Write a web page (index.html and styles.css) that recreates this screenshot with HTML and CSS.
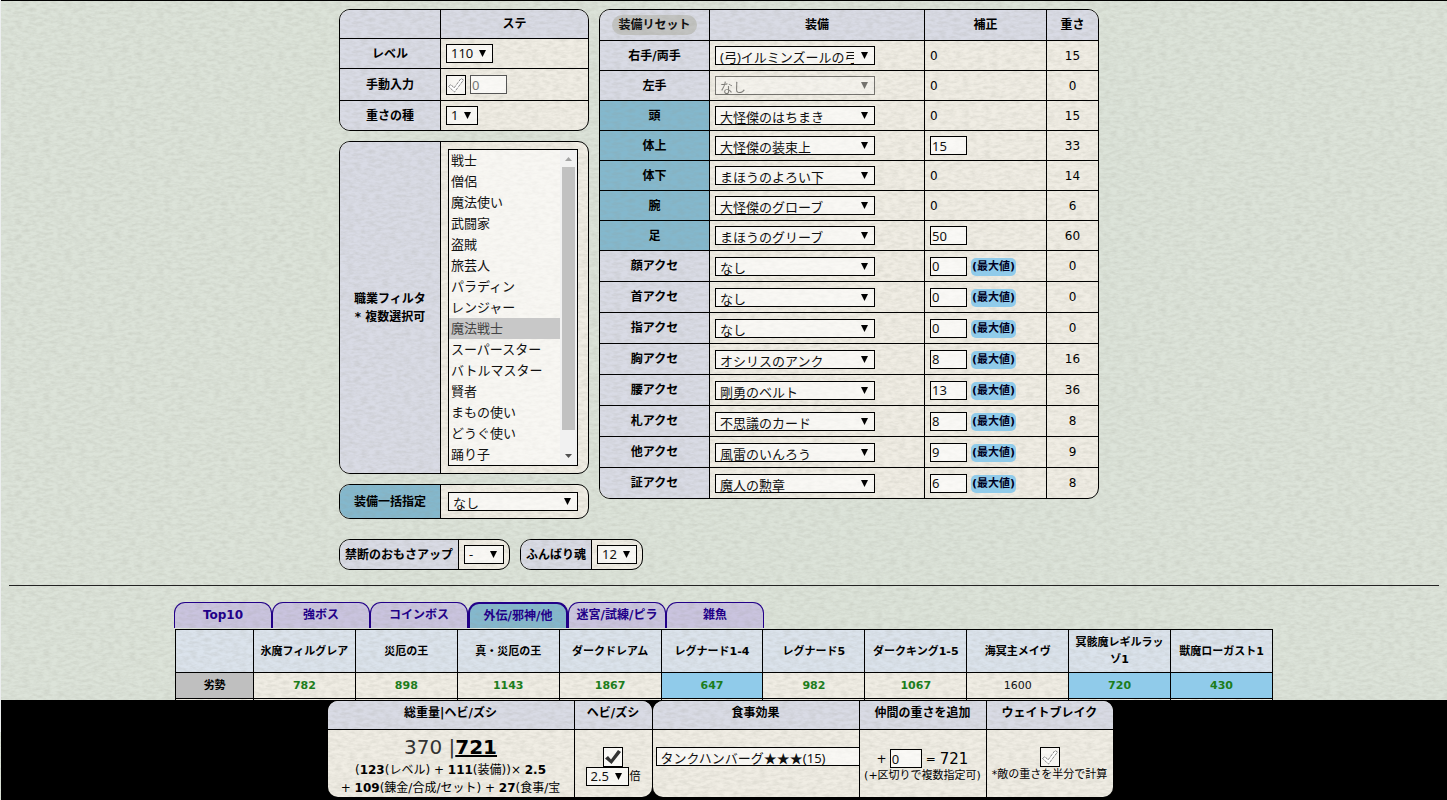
FILE: index.html
```html
<!DOCTYPE html>
<html lang="ja">
<head>
<meta charset="utf-8">
<title>総重量</title>
<link rel="stylesheet" href="styles.css">
</head>
<body>
<main class="build">
  <div class="columns">
    <div class="side">
      <div class="card">
        <table class="form stats">
          <tr class="head"><th></th><th>ステ</th></tr>
          <tr><th><label for="level">レベル</label></th><td><select id="level" class="field w47"><option>110</option></select></td></tr>
          <tr class="manual"><th><label for="manual">手動入力</label></th><td><div class="inline"><input type="checkbox" id="manual" class="check"><input type="text" class="num" value="0" aria-label="手動入力" disabled></div></td></tr>
          <tr><th><label for="seed">重さの種</label></th><td><select id="seed" class="field w32"><option>1</option></select></td></tr>
        </table>
      </div>
      <div class="card">
        <table class="form filter">
          <tr><th><label for="jobs">職業フィルタ<br>* 複数選択可</label></th><td>
            <div class="listbox">
              <select id="jobs" multiple size="15">
                <option>戦士</option><option>僧侶</option><option>魔法使い</option><option>武闘家</option><option>盗賊</option><option>旅芸人</option><option>パラディン</option><option>レンジャー</option><option selected>魔法戦士</option><option>スーパースター</option><option>バトルマスター</option><option>賢者</option><option>まもの使い</option><option>どうぐ使い</option><option>踊り子</option>
              </select>
              <div class="scrollbar">
                <svg width="17" height="17" viewBox="0 0 17 17"><path d="M5 11l3.5-4 3.5 4z" fill="#a3a3a3"/></svg>
                <div class="thumb"></div>
                <svg width="17" height="17" viewBox="0 0 17 17"><path d="M5 6l3.5 4L12 6z" fill="#505050"/></svg>
              </div>
            </div>
          </td></tr>
        </table>
      </div>
      <div class="card">
        <table class="form bulk">
          <tr><th class="teal"><label for="bulk">装備一括指定</label></th><td><select id="bulk" class="field w130 low"><option>なし</option></select></td></tr>
        </table>
      </div>
    </div>
    <div class="card gear-card">
      <table class="form gear">
        <colgroup><col class="c1"><col class="c2"><col class="c3"><col class="c4"></colgroup>
        <tr class="head"><th><button type="button" class="reset">装備リセット</button></th><th>装備</th><th>補正</th><th>重さ</th></tr>
        <tr><th><label for="g1">右手/両手</label></th><td><select id="g1" class="field w160 low"><option>(弓)イルミンズールの弓</option></select></td><td>0</td><td>15</td></tr>
        <tr><th><label for="g2">左手</label></th><td><select id="g2" class="field w160 low" disabled><option>なし</option></select></td><td>0</td><td>0</td></tr>
        <tr><th class="teal"><label for="g3">頭</label></th><td><select id="g3" class="field w160 low"><option>大怪傑のはちまき</option></select></td><td>0</td><td>15</td></tr>
        <tr><th class="teal"><label for="g4">体上</label></th><td><select id="g4" class="field w160 low"><option>大怪傑の装束上</option></select></td><td><input class="num" type="text" value="15" aria-label="体上 補正"></td><td>33</td></tr>
        <tr><th class="teal"><label for="g5">体下</label></th><td><select id="g5" class="field w160 low"><option>まほうのよろい下</option></select></td><td>0</td><td>14</td></tr>
        <tr><th class="teal"><label for="g6">腕</label></th><td><select id="g6" class="field w160 low"><option>大怪傑のグローブ</option></select></td><td>0</td><td>6</td></tr>
        <tr><th class="teal"><label for="g7">足</label></th><td><select id="g7" class="field w160 low"><option>まほうのグリーブ</option></select></td><td><input class="num" type="text" value="50" aria-label="足 補正"></td><td>60</td></tr>
        <tr class="acc"><th><label for="g8">顔アクセ</label></th><td><select id="g8" class="field w160 low"><option>なし</option></select></td><td><div class="inline"><input class="num" type="text" value="0" aria-label="顔 補正"><button type="button" class="max">(最大値)</button></div></td><td>0</td></tr>
        <tr class="acc"><th><label for="g9">首アクセ</label></th><td><select id="g9" class="field w160 low"><option>なし</option></select></td><td><div class="inline"><input class="num" type="text" value="0" aria-label="首 補正"><button type="button" class="max">(最大値)</button></div></td><td>0</td></tr>
        <tr class="acc"><th><label for="g10">指アクセ</label></th><td><select id="g10" class="field w160 low"><option>なし</option></select></td><td><div class="inline"><input class="num" type="text" value="0" aria-label="指 補正"><button type="button" class="max">(最大値)</button></div></td><td>0</td></tr>
        <tr class="acc"><th><label for="g11">胸アクセ</label></th><td><select id="g11" class="field w160 low"><option>オシリスのアンク</option></select></td><td><div class="inline"><input class="num" type="text" value="8" aria-label="胸 補正"><button type="button" class="max">(最大値)</button></div></td><td>16</td></tr>
        <tr class="acc"><th><label for="g12">腰アクセ</label></th><td><select id="g12" class="field w160 low"><option>剛勇のベルト</option></select></td><td><div class="inline"><input class="num" type="text" value="13" aria-label="腰 補正"><button type="button" class="max">(最大値)</button></div></td><td>36</td></tr>
        <tr class="acc"><th><label for="g13">札アクセ</label></th><td><select id="g13" class="field w160 low"><option>不思議のカード</option></select></td><td><div class="inline"><input class="num" type="text" value="8" aria-label="札 補正"><button type="button" class="max">(最大値)</button></div></td><td>8</td></tr>
        <tr class="acc"><th><label for="g14">他アクセ</label></th><td><select id="g14" class="field w160 low"><option>風雷のいんろう</option></select></td><td><div class="inline"><input class="num" type="text" value="9" aria-label="他 補正"><button type="button" class="max">(最大値)</button></div></td><td>9</td></tr>
        <tr class="acc"><th><label for="g15">証アクセ</label></th><td><select id="g15" class="field w160 low"><option>魔人の勲章</option></select></td><td><div class="inline"><input class="num" type="text" value="6" aria-label="証 補正"><button type="button" class="max">(最大値)</button></div></td><td>8</td></tr>
      </table>
    </div>
  </div>
  <div class="extras">
    <div class="card"><table class="form extra forbid"><tr><th><label for="forbid">禁断のおもさアップ</label></th><td><select id="forbid" class="field w40"><option>-</option></select></td></tr></table></div>
    <div class="card"><table class="form extra soul"><tr><th><label for="soul">ふんばり魂</label></th><td><select id="soul" class="field w40"><option>12</option></select></td></tr></table></div>
  </div>
</main>
<hr>
<section class="results">
  <nav class="tabs">
    <a href="#top10">Top10</a><a href="#strong">強ボス</a><a href="#coin">コインボス</a><a href="#gaiden" class="active">外伝/邪神/他</a><a href="#maze">迷宮/試練/ピラ</a><a href="#mob">雑魚</a>
  </nav>
  <table class="bosses">
    <tr><th class="corner"></th><th>氷魔フィルグレア</th><th>災厄の王</th><th>真・災厄の王</th><th>ダークドレアム</th><th>レグナード1-4</th><th>レグナード5</th><th>ダークキング1-5</th><th>海冥主メイヴ</th><th>冥骸魔レギルラッゾ1</th><th>獣魔ローガスト1</th></tr>
    <tr><th class="grey">劣勢</th><td>782</td><td>898</td><td>1143</td><td>1867</td><td class="hit">647</td><td>982</td><td>1067</td><td class="plain">1600</td><td class="hit">720</td><td class="hit">430</td></tr>
    <tr><td></td><td></td><td></td><td></td><td></td><td></td><td></td><td></td><td></td><td></td><td></td></tr>
  </table>
</section>
<footer class="dock">
  <section class="panel total">
    <div class="cell">
      <h2>総重量|ヘビ/ズシ</h2>
      <div class="body formula">
        <div class="sum">370 |<b>721</b></div>
        <div class="terms">(<b>123</b>(レベル) + <b>111</b>(装備))× <b>2.5</b></div>
        <div class="terms">+ <b>109</b>(錬金/合成/セット) + <b>27</b>(食事/宝</div>
      </div>
    </div>
    <div class="cell">
      <h2>ヘビ/ズシ</h2>
      <div class="body toggles">
        <input type="checkbox" class="check" checked aria-label="ヘビ/ズシ">
        <div class="rate"><select id="rate" class="field w43"><option>2.5</option></select><label for="rate">倍</label></div>
      </div>
    </div>
  </section>
  <section class="panel options">
    <div class="cell">
      <h2>食事効果</h2>
      <div class="body food"><select class="field w260 low" aria-label="食事効果"><option>タンクハンバーグ★★★(15)</option></select></div>
    </div>
    <div class="cell">
      <h2>仲間の重さを追加</h2>
      <div class="body ally">
        <div class="calc"><label for="ally">+</label><input id="ally" class="num w32" type="text" value="0"><span>=</span><output>721</output></div>
        <p>(+区切りで複数指定可)</p>
      </div>
    </div>
    <div class="cell">
      <h2><label for="wb">ウェイトブレイク</label></h2>
      <div class="body toggles">
        <input type="checkbox" id="wb" class="check">
        <p>*敵の重さを半分で計算</p>
      </div>
    </div>
  </section>
</footer>
</body>
</html>
```
FILE: styles.css
```css
:root {
  --paper: url("data:image/svg+xml,%3Csvg xmlns='http://www.w3.org/2000/svg' width='256' height='256'%3E%3Cfilter id='n' x='0' y='0' width='100%25' height='100%25'%3E%3CfeTurbulence type='fractalNoise' baseFrequency='.14 .34' numOctaves='3' seed='4' stitchTiles='stitch'/%3E%3CfeColorMatrix values='0 0 0 0 .3 0 0 0 0 .3 0 0 0 0 .25 .36 0 0 0 -.12'/%3E%3C/filter%3E%3Crect width='256' height='256' filter='url(%23n)'/%3E%3C/svg%3E");
  --arrow: url("data:image/svg+xml,%3Csvg xmlns='http://www.w3.org/2000/svg' width='7' height='7'%3E%3Cpath d='M0 0h7L3.500 7z'/%3E%3C/svg%3E");
  --lilac: #d9dbe5;
  --cream: #f0ede4;
  --teal: #84b8cd;
  --sky: #90cbea;
}
* { box-sizing: border-box; }
html { border-left: 1px solid #eceeef; }
body {
  margin: 0;
  padding: 8px;
  border-top: 1px solid #000;
  background: #dce3d9 var(--paper);
  color: #000;
  font: 12px/18px "DejaVu Sans", "Noto Sans CJK JP", sans-serif;
}
select, input, button { font: 13px/17px "Noto Sans", "Noto Sans CJK JP", sans-serif; margin: 0; color: #111; }
.build { width: fit-content; margin: 0 auto; padding-right: 10px; }
.columns { display: flex; align-items: flex-start; gap: 10px; }
.side { display: flex; flex-direction: column; gap: 10px; width: 250px; }
.gear-card { width: 500px; }
.extras { display: flex; gap: 10px; margin-top: 20px; }
.card { border: 1px solid #000; border-radius: 11px; overflow: hidden; background: var(--cream) var(--paper); }
.form { width: 100%; border-spacing: 0; table-layout: fixed; }
.form th, .form td { height: 30px; padding: 0; border-top: 1px solid #000; }
.form tr:first-child > * { border-top: 0; }
.form th + *, .form td + * { border-left: 1px solid #000; }
.form th { background: var(--lilac) var(--paper); }
.form td { padding-left: 5px; }
.form th.teal { background: var(--teal) var(--paper); }
.form th:first-child { width: 100px; }
.form select, .form input { display: block; }
.stats .head th { height: 28px; }
.stats .manual > * { height: 32px; }
.filter td, .bulk td { padding: 7px; }
.filter th { line-height: 18px; }
.bulk th, .bulk td { height: 33px; }
.gear .c1 { width: 109px; }
.gear .c2 { width: 215px; }
.gear .c3 { width: 122px; }
.gear .c4 { width: 52px; }
.gear td:last-child { padding: 0; text-align: center; }
.gear .acc > * { height: 31px; }
.extra th, .extra td { height: 29px; }
.form.forbid, .form.soul { width: auto; }
.form.forbid th { width: 118px; }
.form.soul th { width: 70px; }
.extra td { width: 51px; }
.inline { display: flex; align-items: center; gap: 4px; }

.field {
  appearance: none;
  height: 19px;
  padding: 0 18px 0 4px;
  border: 1px solid #000;
  border-radius: 0;
  background: var(--arrow) no-repeat right 6px top 5px, rgba(255, 255, 255, .6);
  overflow: hidden;
  text-overflow: clip;
}
.field:disabled { opacity: .5; }
.low { padding-top: 2px; }
.w32 { width: 32px; }
.w40 { width: 40px; }
.w43 { width: 43px; }
.w47 { width: 47px; }
.w130 { width: 130px; }
.w160 { width: 160px; padding-right: 20px; }
.w260 { width: 260px; }
.num {
  width: 37px;
  height: 19px;
  padding: 0 0 0 1px;
  border: 1px solid #000;
  background: rgba(255, 255, 255, .65);
}
.num:disabled { border-color: #555; color: #777; }
.num.w32 { width: 32px; }
.check {
  appearance: none;
  width: 20px;
  height: 20px;
  border: 1px solid #000;
  background: url("data:image/svg+xml,%3Csvg xmlns='http://www.w3.org/2000/svg' width='18' height='18'%3E%3Cpath d='M1.500 10.500l2.500-2 3 3.500L14 2.500l2.500 1.500L7.500 16z' fill='%23fff' stroke='%23888' stroke-dasharray='3 1'/%3E%3C/svg%3E") no-repeat, rgba(255, 255, 255, .6);
}
.check:checked {
  background: url("data:image/svg+xml,%3Csvg xmlns='http://www.w3.org/2000/svg' width='18' height='18'%3E%3Cpath d='M1 10.500l3-2.500 3 3.500L14 2l3 2-9.500 12z' fill='%23333'/%3E%3C/svg%3E") no-repeat, rgba(255, 255, 255, .7);
}
.reset {
  height: 20px;
  padding: 0 6px;
  border: 0;
  border-radius: 10px;
  background: #c2c3c1 var(--paper);
  font: bold 12px/20px "DejaVu Sans", "Noto Sans CJK JP", sans-serif;
}
.max {
  height: 18px;
  margin-top: 2px;
  padding: 0 1px;
  border: 0;
  border-radius: 5px;
  background: var(--sky);
  color: #002;
  font: bold 11px/18px "DejaVu Sans", "Noto Sans CJK JP", sans-serif;
}

.listbox { position: relative; width: 130px; border: 1px solid #000; background: rgba(255, 255, 255, .55); }
.listbox select {
  width: 100%;
  height: 315px;
  padding: 0 17px 0 0;
  border: 0;
  background: none;
  overflow: hidden;
  outline: 0;
  scrollbar-width: none;
}
.listbox option { height: 21px; padding: 0 2px; line-height: 18px; }
.listbox option:checked { background: #c8c8c8 linear-gradient(#c8c8c8, #c8c8c8); color: #444; }
.scrollbar { position: absolute; inset: 0 0 0 auto; width: 17px; display: flex; flex-direction: column; background: #f1f1f1; }
.thumb { flex: 1; margin: 0 2px 18px; background: #c1c1c1; }
.scrollbar svg { flex: none; }

hr { height: 1px; margin: 15px 0 16px; border: 0; background: #222; }
.results { width: fit-content; margin: 0 auto; }
.tabs { display: flex; gap: 0; height: 26px; margin: 0 0 1px -1px; }
.tabs a {
  width: 98px;
  border: 1px solid #208;
  border-bottom: 0;
  border-radius: 11px 11px 0 0;
  background: #cac4df var(--paper);
  color: #208;
  font-weight: bold;
  line-height: 24px;
  text-align: center;
  text-decoration: none;
  white-space: nowrap;
}
.tabs .active { width: 100px; border-width: 2px; background: var(--teal) var(--paper); }
.bosses { width: 1098px; border-spacing: 0; border-right: 1px solid #000; table-layout: fixed; font-size: 11px; line-height: 17px; }
.bosses th, .bosses td { height: 26px; padding: 0 4px; border: solid #000; border-width: 1px 0 0 1px; text-align: center; }
.bosses th { height: 43px; background: #dbe3ec var(--paper); }
.bosses .corner { width: 78px; }
.bosses td { background: var(--cream) var(--paper); color: #1c7d1c; font-weight: bold; }
.bosses .grey { height: 26px; background: #bfbfbf; }
.bosses .hit { background: var(--sky); }
.bosses .plain { color: #111; font-weight: normal; }

.dock {
  position: fixed;
  inset: auto 0 0 1px;
  height: 100px;
  padding: 1px 8px 3px 0;
  display: flex;
  justify-content: center;
  gap: 1px;
  background: #000;
}
.panel { display: grid; gap: 1px; border-radius: 10px; overflow: hidden; background: #000; }
.total { grid-template-columns: 246px 77px; }
.options { grid-template-columns: 206px 126px 126px; }
.cell { display: flex; flex-direction: column; min-width: 0; overflow: hidden; background: var(--cream) var(--paper); }
.cell h2 { margin: 0; height: 29px; border-bottom: 1px solid #000; background: var(--lilac) var(--paper); font-size: 12px; line-height: 24px; text-align: center; }
.cell p { margin: 0; font-size: 11px; line-height: 16px; white-space: nowrap; }
.body { flex: 1; min-height: 0; white-space: nowrap; }
.formula { padding-top: 4px; text-align: center; }
.sum { color: #333; font-size: 20px; line-height: 27px; }
.sum b { color: #000; text-decoration: underline; }
.terms { line-height: 18px; }
.toggles { display: flex; flex-direction: column; align-items: center; padding-top: 17px; }
.rate { display: flex; align-items: center; gap: 1px; font-size: 11px; }
.food { padding: 17px 0 0 3px; }
.ally { display: flex; flex-direction: column; align-items: center; padding-top: 19px; }
.calc { display: flex; align-items: center; gap: 4px; }
.calc label { margin-right: -1px; }
.calc output { font-size: 15px; }
```
